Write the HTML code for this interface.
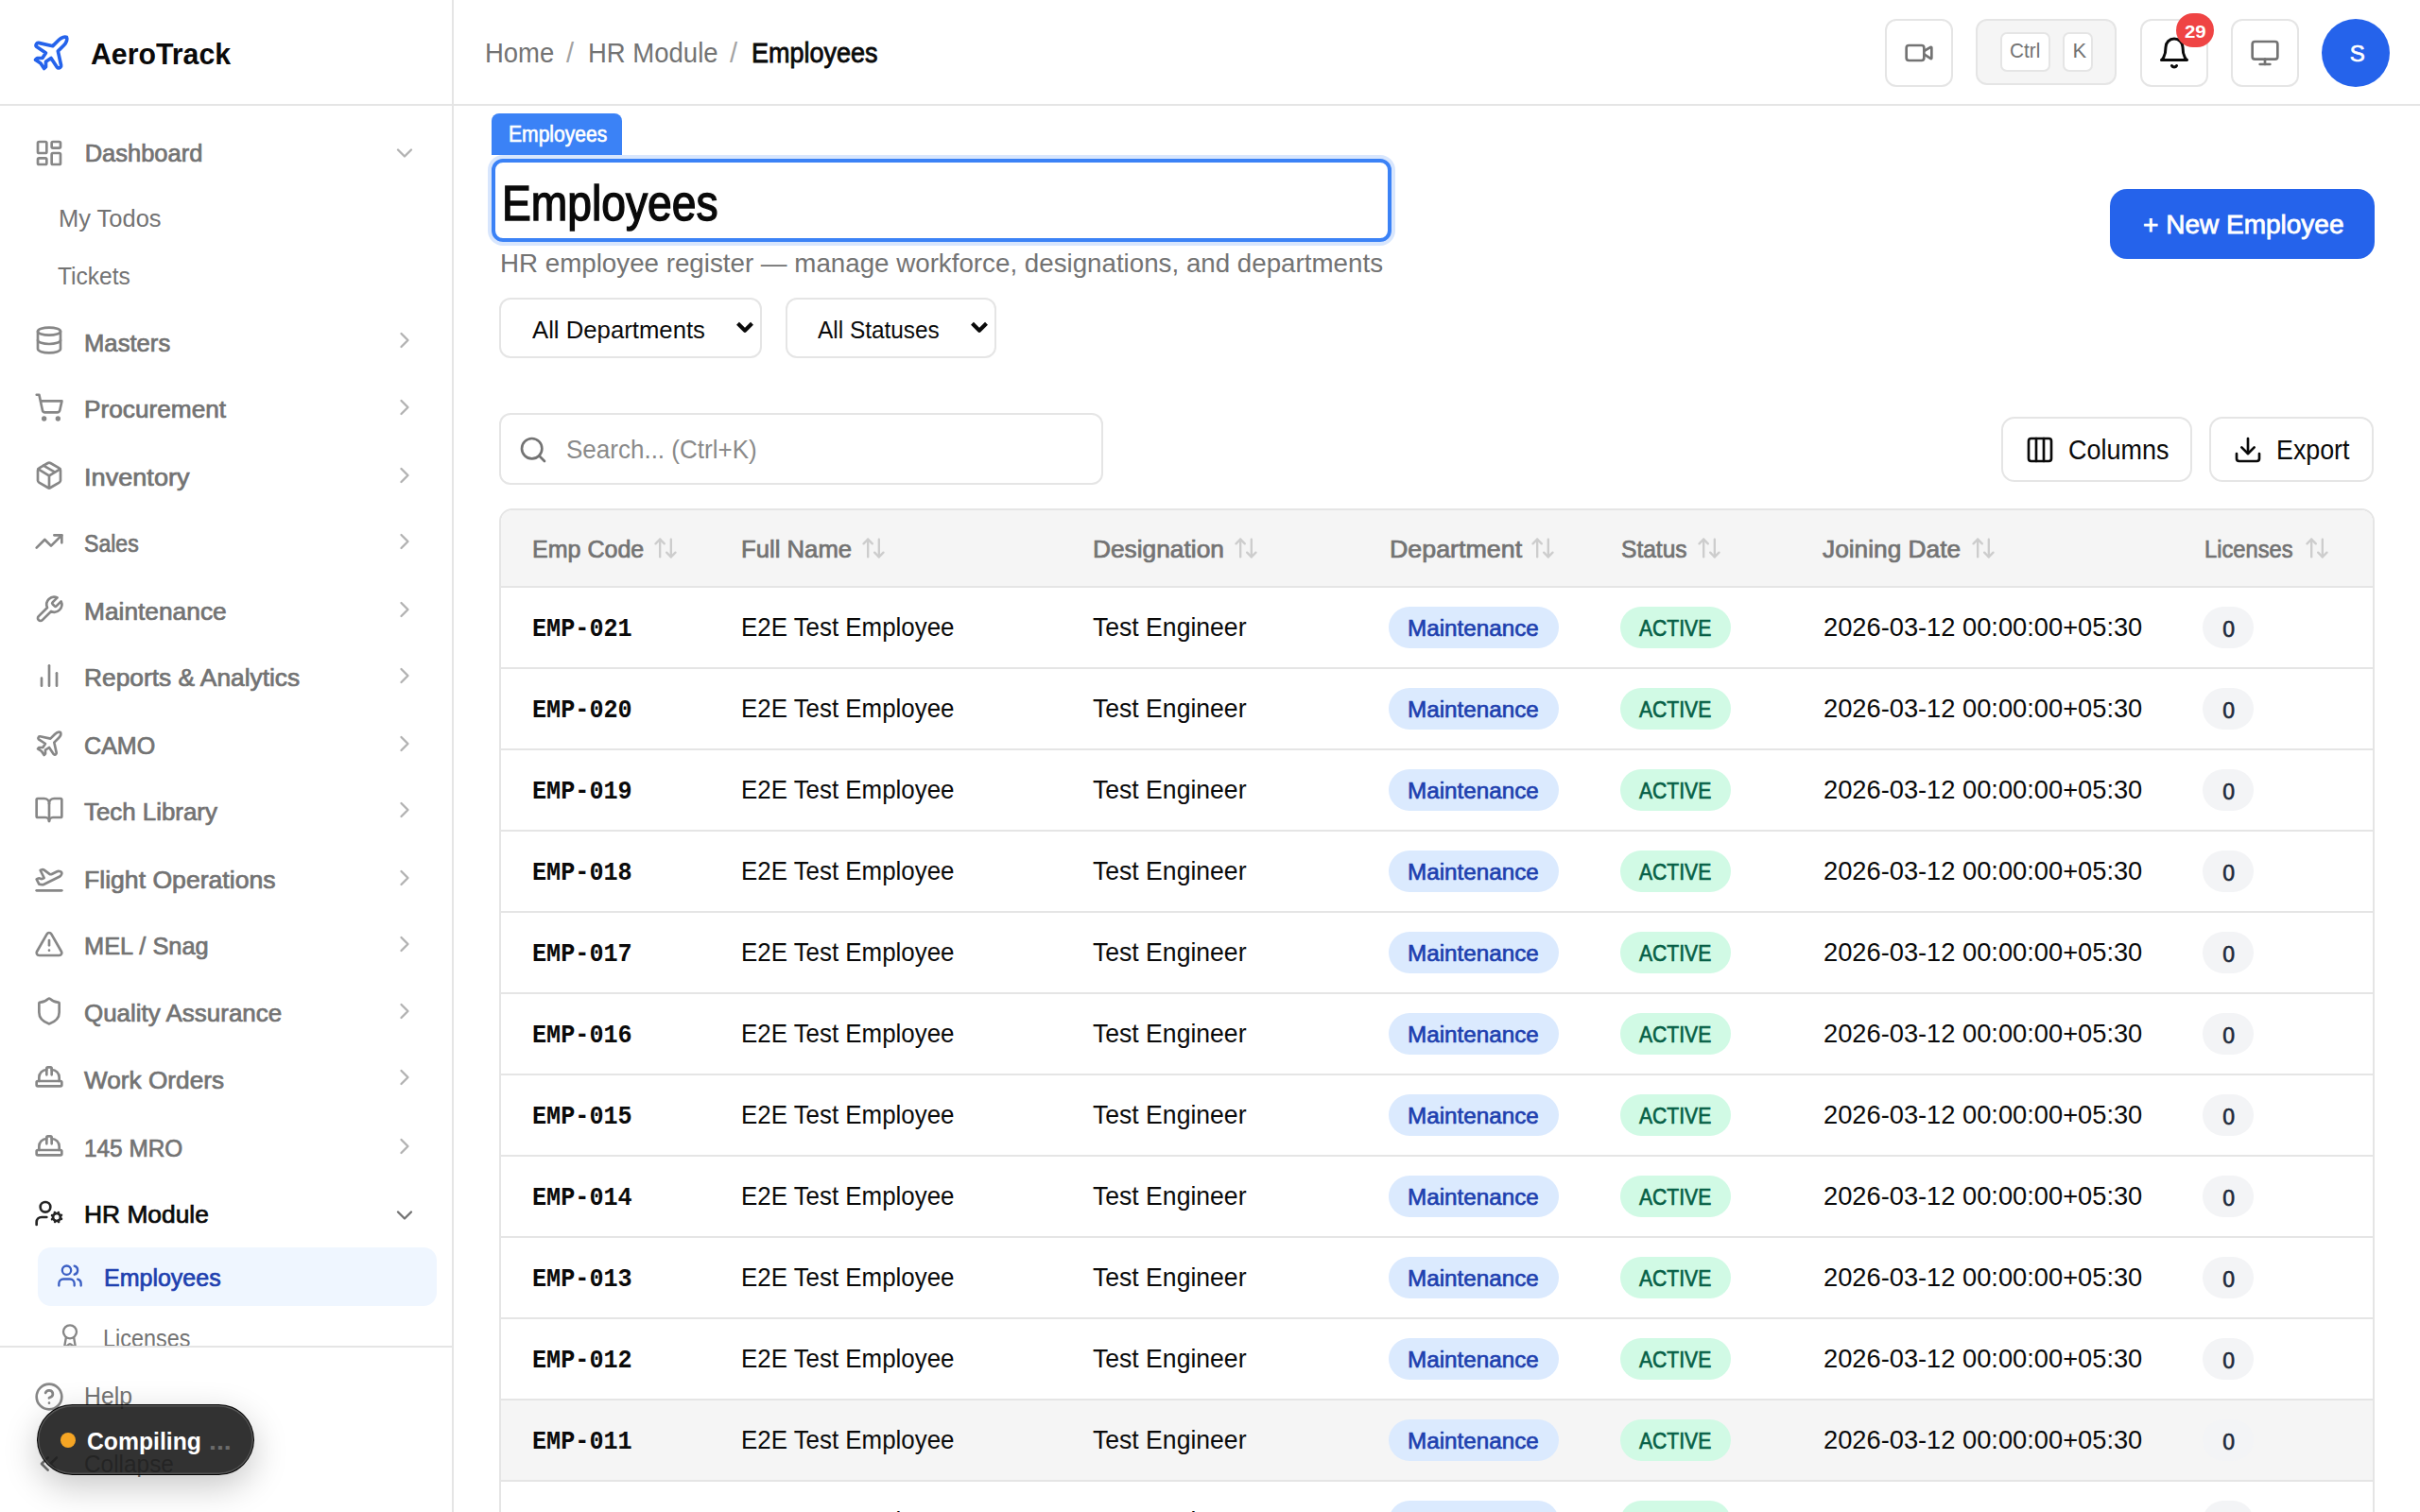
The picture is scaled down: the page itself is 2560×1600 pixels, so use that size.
<!DOCTYPE html>
<html><head><meta charset="utf-8"><title>Employees</title>
<style>
html,body{margin:0;padding:0;width:2560px;height:1600px;overflow:hidden;background:#fff;font-family:"Liberation Sans",sans-serif;}
.t{position:absolute;line-height:1;white-space:nowrap}
.b{position:absolute}
.i{position:absolute;overflow:visible}
</style></head><body>
<div class="b" style="left:0px;top:110px;width:2560px;height:2px;background:#e5e5e5"></div>
<div class="b" style="left:478px;top:0px;width:2px;height:1600px;background:#e5e5e5"></div>
<svg class="i" style="left:32.25px;top:33.60px;" width="44" height="44" viewBox="0 0 24 24" fill="none" stroke="#2563eb" stroke-width="2" stroke-linecap="round" stroke-linejoin="round"><path d="M17.8 19.2 16 11l3.5-3.5C21 6 21.5 4 21 3c-1-.5-3 0-4.5 1.5L13 8 4.8 6.2c-.5-.1-.9.1-1.1.5l-.3.5c-.2.5-.1 1 .3 1.3L9 12l-2 3H4l-1 1 3 2 2 3 1-1v-3l3-2 3.5 5.3c.3.4.8.5 1.3.3l.5-.2c.4-.3.6-.7.5-1.2z"/></svg>
<div class="t" style="left:96.40px;top:40.71px;font-size:32px;font-weight:700;color:#0a0a0a;letter-spacing:0.000px;font-family:'Liberation Sans', sans-serif;transform:scaleX(0.9461);transform-origin:0 0;">AeroTrack</div>
<div class="t" style="left:513.00px;top:41.55px;font-size:29px;font-weight:400;color:#737373;letter-spacing:0.000px;font-family:'Liberation Sans', sans-serif;transform:scaleX(0.9467);transform-origin:0 0;">Home</div>
<div class="t" style="left:599.00px;top:41.55px;font-size:29px;font-weight:400;color:#a3a3a3;letter-spacing:0.000px;font-family:'Liberation Sans', sans-serif;">/</div>
<div class="t" style="left:621.50px;top:41.55px;font-size:29px;font-weight:400;color:#737373;letter-spacing:0.000px;font-family:'Liberation Sans', sans-serif;transform:scaleX(0.9483);transform-origin:0 0;">HR Module</div>
<div class="t" style="left:772.00px;top:41.55px;font-size:29px;font-weight:400;color:#a3a3a3;letter-spacing:0.000px;font-family:'Liberation Sans', sans-serif;">/</div>
<div class="t" style="left:795.18px;top:41.55px;font-size:29px;font-weight:400;color:#0a0a0a;letter-spacing:0.000px;font-family:'Liberation Sans', sans-serif;transform:scaleX(0.9305);transform-origin:0 0;-webkit-text-stroke:0.81px #0a0a0a;">Employees</div>
<div class="b" style="left:1994px;top:20px;width:72px;height:72px;border:2px solid #e5e5e5;border-radius:12px;box-sizing:border-box;background:#fff"></div>
<svg class="i" style="left:2014.00px;top:40.00px;" width="32" height="32" viewBox="0 0 24 24" fill="none" stroke="#737373" stroke-width="2" stroke-linecap="round" stroke-linejoin="round"><path d="m16 13 5.223 3.482a.5.5 0 0 0 .777-.416V7.87a.5.5 0 0 0-.752-.432L16 10.5"/><rect x="2" y="6" width="14" height="12" rx="2"/></svg>
<div class="b" style="left:2090px;top:20px;width:149px;height:70px;border:2px solid #e5e5e5;border-radius:12px;box-sizing:border-box;background:#f5f5f5"></div>
<div class="b" style="left:2116px;top:34px;width:53px;height:42px;border:2px solid #e5e5e5;border-radius:7px;box-sizing:border-box;background:#fff"></div>
<div class="b" style="left:2182px;top:34px;width:32px;height:42px;border:2px solid #e5e5e5;border-radius:7px;box-sizing:border-box;background:#fff"></div>
<div class="t" style="left:2126.00px;top:43.27px;font-size:22px;font-weight:400;color:#737373;letter-spacing:0.000px;font-family:'Liberation Sans', sans-serif;transform:scaleX(0.9442);transform-origin:0 0;">Ctrl</div>
<div class="t" style="left:2192.50px;top:43.27px;font-size:22px;font-weight:400;color:#737373;letter-spacing:0.000px;font-family:'Liberation Sans', sans-serif;">K</div>
<div class="b" style="left:2264px;top:20px;width:72px;height:72px;border:2px solid #e5e5e5;border-radius:12px;box-sizing:border-box;background:#fff"></div>
<svg class="i" style="left:2282.00px;top:38.00px;" width="36" height="36" viewBox="0 0 24 24" fill="none" stroke="#0a0a0a" stroke-width="2" stroke-linecap="round" stroke-linejoin="round"><path d="M6 8a6 6 0 0 1 12 0c0 7 3 9 3 9H3s3-2 3-9"/><path d="M10.3 21a1.94 1.94 0 0 0 3.4 0"/></svg>
<div class="b" style="left:2302px;top:14px;width:40px;height:36px;background:#ef4444;border-radius:20px"></div>
<div class="t" style="left:2311.00px;top:24.01px;font-size:19px;font-weight:700;color:#fff;letter-spacing:0.000px;font-family:'Liberation Sans', sans-serif;transform:scaleX(1.0763);transform-origin:0 0;">29</div>
<div class="b" style="left:2360px;top:20px;width:72px;height:72px;border:2px solid #e5e5e5;border-radius:12px;box-sizing:border-box;background:#fff"></div>
<svg class="i" style="left:2380.00px;top:40.00px;" width="32" height="32" viewBox="0 0 24 24" fill="none" stroke="#737373" stroke-width="2" stroke-linecap="round" stroke-linejoin="round"><rect width="20" height="14" x="2" y="3" rx="2"/><line x1="8" x2="16" y1="21" y2="21"/><line x1="12" x2="12" y1="17" y2="21"/></svg>
<div class="b" style="left:2456px;top:20px;width:72px;height:72px;background:#2563eb;border-radius:50%"></div>
<div class="t" style="left:2485.84px;top:45.38px;font-size:24px;font-weight:400;color:#fff;letter-spacing:0.000px;font-family:'Liberation Sans', sans-serif;-webkit-text-stroke:0.67px #fff;">S</div>
<div class="t" style="left:89.66px;top:150.01px;font-size:25.5px;font-weight:400;color:#737373;letter-spacing:0.000px;font-family:'Liberation Sans', sans-serif;-webkit-text-stroke:0.71px #737373;">Dashboard</div>
<svg class="i" style="left:36.00px;top:146.00px;" width="32" height="32" viewBox="0 0 24 24" fill="none" stroke="#878787" stroke-width="2" stroke-linecap="round" stroke-linejoin="round"><rect width="7" height="9" x="3" y="3" rx="1"/><rect width="7" height="5" x="14" y="3" rx="1"/><rect width="7" height="9" x="14" y="12" rx="1"/><rect width="7" height="5" x="3" y="16" rx="1"/></svg>
<svg class="i" style="left:414.00px;top:148.00px;" width="28" height="28" viewBox="0 0 24 24" fill="none" stroke="#b2b2b2" stroke-width="2" stroke-linecap="round" stroke-linejoin="round"><path d="m6 9 6 6 6-6"/></svg>
<div class="t" style="left:61.50px;top:217.99px;font-size:26px;font-weight:400;color:#737373;letter-spacing:0.000px;font-family:'Liberation Sans', sans-serif;transform:scaleX(0.9796);transform-origin:0 0;">My Todos</div>
<div class="t" style="left:60.50px;top:279.39px;font-size:26px;font-weight:400;color:#737373;letter-spacing:0.000px;font-family:'Liberation Sans', sans-serif;transform:scaleX(0.9449);transform-origin:0 0;">Tickets</div>
<div class="t" style="left:88.96px;top:350.71px;font-size:25.5px;font-weight:400;color:#737373;letter-spacing:0.000px;font-family:'Liberation Sans', sans-serif;transform:scaleX(1.0058);transform-origin:0 0;-webkit-text-stroke:0.71px #737373;">Masters</div>
<svg class="i" style="left:36.00px;top:344.30px;" width="32" height="32" viewBox="0 0 24 24" fill="none" stroke="#878787" stroke-width="2" stroke-linecap="round" stroke-linejoin="round"><ellipse cx="12" cy="5" rx="9" ry="3"/><path d="M3 5V19A9 3 0 0 0 21 19V5"/><path d="M3 12A9 3 0 0 0 21 12"/></svg>
<svg class="i" style="left:414.00px;top:346.30px;" width="28" height="28" viewBox="0 0 24 24" fill="none" stroke="#b2b2b2" stroke-width="2" stroke-linecap="round" stroke-linejoin="round"><path d="m9 18 6-6-6-6"/></svg>
<div class="t" style="left:88.97px;top:421.11px;font-size:25.5px;font-weight:400;color:#737373;letter-spacing:0.000px;font-family:'Liberation Sans', sans-serif;transform:scaleX(1.0286);transform-origin:0 0;-webkit-text-stroke:0.71px #737373;">Procurement</div>
<svg class="i" style="left:36.00px;top:414.70px;" width="32" height="32" viewBox="0 0 24 24" fill="none" stroke="#878787" stroke-width="2" stroke-linecap="round" stroke-linejoin="round"><circle cx="8" cy="21" r="1"/><circle cx="19" cy="21" r="1"/><path d="M2.05 2.05h2l2.66 12.42a2 2 0 0 0 2 1.58h9.78a2 2 0 0 0 1.95-1.57l1.65-7.43H5.12"/></svg>
<svg class="i" style="left:414.00px;top:416.70px;" width="28" height="28" viewBox="0 0 24 24" fill="none" stroke="#b2b2b2" stroke-width="2" stroke-linecap="round" stroke-linejoin="round"><path d="m9 18 6-6-6-6"/></svg>
<div class="t" style="left:88.98px;top:493.31px;font-size:25.5px;font-weight:400;color:#737373;letter-spacing:0.000px;font-family:'Liberation Sans', sans-serif;transform:scaleX(1.0639);transform-origin:0 0;-webkit-text-stroke:0.71px #737373;">Inventory</div>
<svg class="i" style="left:36.00px;top:486.90px;" width="32" height="32" viewBox="0 0 24 24" fill="none" stroke="#878787" stroke-width="2" stroke-linecap="round" stroke-linejoin="round"><path d="M11 21.73a2 2 0 0 0 2 0l7-4A2 2 0 0 0 21 16V8a2 2 0 0 0-1-1.73l-7-4a2 2 0 0 0-2 0l-7 4A2 2 0 0 0 3 8v8a2 2 0 0 0 1 1.73z"/><path d="M12 22V12"/><path d="m3.3 7 7.703 4.734a2 2 0 0 0 1.994 0L20.7 7"/><path d="m7.5 4.27 9 5.15"/></svg>
<svg class="i" style="left:414.00px;top:488.90px;" width="28" height="28" viewBox="0 0 24 24" fill="none" stroke="#b2b2b2" stroke-width="2" stroke-linecap="round" stroke-linejoin="round"><path d="m9 18 6-6-6-6"/></svg>
<div class="t" style="left:88.92px;top:563.21px;font-size:25.5px;font-weight:400;color:#737373;letter-spacing:0.000px;font-family:'Liberation Sans', sans-serif;transform:scaleX(0.9044);transform-origin:0 0;-webkit-text-stroke:0.71px #737373;">Sales</div>
<svg class="i" style="left:36.00px;top:556.80px;" width="32" height="32" viewBox="0 0 24 24" fill="none" stroke="#878787" stroke-width="2" stroke-linecap="round" stroke-linejoin="round"><polyline points="22 7 13.5 15.5 8.5 10.5 2 17"/><polyline points="16 7 22 7 22 13"/></svg>
<svg class="i" style="left:414.00px;top:558.80px;" width="28" height="28" viewBox="0 0 24 24" fill="none" stroke="#b2b2b2" stroke-width="2" stroke-linecap="round" stroke-linejoin="round"><path d="m9 18 6-6-6-6"/></svg>
<div class="t" style="left:88.97px;top:634.91px;font-size:25.5px;font-weight:400;color:#737373;letter-spacing:0.000px;font-family:'Liberation Sans', sans-serif;transform:scaleX(1.0320);transform-origin:0 0;-webkit-text-stroke:0.71px #737373;">Maintenance</div>
<svg class="i" style="left:36.00px;top:628.50px;" width="32" height="32" viewBox="0 0 24 24" fill="none" stroke="#878787" stroke-width="2" stroke-linecap="round" stroke-linejoin="round"><path d="M14.7 6.3a1 1 0 0 0 0 1.4l1.6 1.6a1 1 0 0 0 1.4 0l3.77-3.77a6 6 0 0 1-7.94 7.94l-6.91 6.91a2.12 2.12 0 0 1-3-3l6.91-6.91a6 6 0 0 1 7.94-7.94l-3.76 3.76z"/></svg>
<svg class="i" style="left:414.00px;top:630.50px;" width="28" height="28" viewBox="0 0 24 24" fill="none" stroke="#b2b2b2" stroke-width="2" stroke-linecap="round" stroke-linejoin="round"><path d="m9 18 6-6-6-6"/></svg>
<div class="t" style="left:88.97px;top:704.91px;font-size:25.5px;font-weight:400;color:#737373;letter-spacing:0.000px;font-family:'Liberation Sans', sans-serif;transform:scaleX(1.0320);transform-origin:0 0;-webkit-text-stroke:0.71px #737373;">Reports &amp; Analytics</div>
<svg class="i" style="left:36.00px;top:698.50px;" width="32" height="32" viewBox="0 0 24 24" fill="none" stroke="#878787" stroke-width="2" stroke-linecap="round" stroke-linejoin="round"><line x1="18" x2="18" y1="20" y2="10"/><line x1="12" x2="12" y1="20" y2="4"/><line x1="6" x2="6" y1="20" y2="14"/></svg>
<svg class="i" style="left:414.00px;top:700.50px;" width="28" height="28" viewBox="0 0 24 24" fill="none" stroke="#b2b2b2" stroke-width="2" stroke-linecap="round" stroke-linejoin="round"><path d="m9 18 6-6-6-6"/></svg>
<div class="t" style="left:88.95px;top:777.31px;font-size:25.5px;font-weight:400;color:#737373;letter-spacing:0.000px;font-family:'Liberation Sans', sans-serif;transform:scaleX(0.9843);transform-origin:0 0;-webkit-text-stroke:0.71px #737373;">CAMO</div>
<svg class="i" style="left:36.00px;top:770.90px;" width="32" height="32" viewBox="0 0 24 24" fill="none" stroke="#878787" stroke-width="2" stroke-linecap="round" stroke-linejoin="round"><path d="M17.8 19.2 16 11l3.5-3.5C21 6 21.5 4 21 3c-1-.5-3 0-4.5 1.5L13 8 4.8 6.2c-.5-.1-.9.1-1.1.5l-.3.5c-.2.5-.1 1 .3 1.3L9 12l-2 3H4l-1 1 3 2 2 3 1-1v-3l3-2 3.5 5.3c.3.4.8.5 1.3.3l.5-.2c.4-.3.6-.7.5-1.2z"/></svg>
<svg class="i" style="left:414.00px;top:772.90px;" width="28" height="28" viewBox="0 0 24 24" fill="none" stroke="#b2b2b2" stroke-width="2" stroke-linecap="round" stroke-linejoin="round"><path d="m9 18 6-6-6-6"/></svg>
<div class="t" style="left:88.96px;top:846.91px;font-size:25.5px;font-weight:400;color:#737373;letter-spacing:0.000px;font-family:'Liberation Sans', sans-serif;transform:scaleX(1.0146);transform-origin:0 0;-webkit-text-stroke:0.71px #737373;">Tech Library</div>
<svg class="i" style="left:36.00px;top:840.50px;" width="32" height="32" viewBox="0 0 24 24" fill="none" stroke="#878787" stroke-width="2" stroke-linecap="round" stroke-linejoin="round"><path d="M12 7v14"/><path d="M3 18a1 1 0 0 1-1-1V4a1 1 0 0 1 1-1h5a4 4 0 0 1 4 4 4 4 0 0 1 4-4h5a1 1 0 0 1 1 1v13a1 1 0 0 1-1 1h-6a3 3 0 0 0-3 3 3 3 0 0 0-3-3z"/></svg>
<svg class="i" style="left:414.00px;top:842.50px;" width="28" height="28" viewBox="0 0 24 24" fill="none" stroke="#b2b2b2" stroke-width="2" stroke-linecap="round" stroke-linejoin="round"><path d="m9 18 6-6-6-6"/></svg>
<div class="t" style="left:88.97px;top:918.91px;font-size:25.5px;font-weight:400;color:#737373;letter-spacing:0.000px;font-family:'Liberation Sans', sans-serif;transform:scaleX(1.0431);transform-origin:0 0;-webkit-text-stroke:0.71px #737373;">Flight Operations</div>
<svg class="i" style="left:36.00px;top:912.50px;" width="32" height="32" viewBox="0 0 24 24" fill="none" stroke="#878787" stroke-width="2" stroke-linecap="round" stroke-linejoin="round"><path d="M2 22h20"/><path d="M6.36 17.4 4 17l-2-4 1.1-.55a2 2 0 0 1 1.8 0l.17.1a2 2 0 0 0 1.8 0L8 12 5 6l.9-.45a2 2 0 0 1 2.09.2l4.02 3a2 2 0 0 0 2.1.2l4.19-2.06a2.41 2.41 0 0 1 1.73-.17L21 7a1.4 1.4 0 0 1 .87 1.99l-.38.76c-.23.46-.6.84-1.07 1.08L7.58 17.2a2 2 0 0 1-1.22.18Z"/></svg>
<svg class="i" style="left:414.00px;top:914.50px;" width="28" height="28" viewBox="0 0 24 24" fill="none" stroke="#b2b2b2" stroke-width="2" stroke-linecap="round" stroke-linejoin="round"><path d="m9 18 6-6-6-6"/></svg>
<div class="t" style="left:88.96px;top:988.91px;font-size:25.5px;font-weight:400;color:#737373;letter-spacing:0.000px;font-family:'Liberation Sans', sans-serif;transform:scaleX(0.9950);transform-origin:0 0;-webkit-text-stroke:0.71px #737373;">MEL / Snag</div>
<svg class="i" style="left:36.00px;top:982.50px;" width="32" height="32" viewBox="0 0 24 24" fill="none" stroke="#878787" stroke-width="2" stroke-linecap="round" stroke-linejoin="round"><path d="m21.73 18-8-14a2 2 0 0 0-3.48 0l-8 14A2 2 0 0 0 4 21h16a2 2 0 0 0 1.73-3"/><path d="M12 9v4"/><path d="M12 17h.01"/></svg>
<svg class="i" style="left:414.00px;top:984.50px;" width="28" height="28" viewBox="0 0 24 24" fill="none" stroke="#b2b2b2" stroke-width="2" stroke-linecap="round" stroke-linejoin="round"><path d="m9 18 6-6-6-6"/></svg>
<div class="t" style="left:88.96px;top:1060.41px;font-size:25.5px;font-weight:400;color:#737373;letter-spacing:0.000px;font-family:'Liberation Sans', sans-serif;transform:scaleX(1.0177);transform-origin:0 0;-webkit-text-stroke:0.71px #737373;">Quality Assurance</div>
<svg class="i" style="left:36.00px;top:1054.00px;" width="32" height="32" viewBox="0 0 24 24" fill="none" stroke="#878787" stroke-width="2" stroke-linecap="round" stroke-linejoin="round"><path d="M20 13c0 5-3.5 7.5-7.66 8.95a1 1 0 0 1-.67-.01C7.5 20.5 4 18 4 13V6a1 1 0 0 1 1-1c2 0 4.5-1.2 6.24-2.72a1.17 1.17 0 0 1 1.52 0C14.51 3.81 17 5 19 5a1 1 0 0 1 1 1z"/></svg>
<svg class="i" style="left:414.00px;top:1056.00px;" width="28" height="28" viewBox="0 0 24 24" fill="none" stroke="#b2b2b2" stroke-width="2" stroke-linecap="round" stroke-linejoin="round"><path d="m9 18 6-6-6-6"/></svg>
<div class="t" style="left:88.97px;top:1130.51px;font-size:25.5px;font-weight:400;color:#737373;letter-spacing:0.000px;font-family:'Liberation Sans', sans-serif;transform:scaleX(1.0277);transform-origin:0 0;-webkit-text-stroke:0.71px #737373;">Work Orders</div>
<svg class="i" style="left:36.00px;top:1124.10px;" width="32" height="32" viewBox="0 0 24 24" fill="none" stroke="#878787" stroke-width="2" stroke-linecap="round" stroke-linejoin="round"><path d="M2 18a1 1 0 0 0 1 1h18a1 1 0 0 0 1-1v-2a1 1 0 0 0-1-1H3a1 1 0 0 0-1 1v2z"/><path d="M10 10V5a1 1 0 0 1 1-1h2a1 1 0 0 1 1 1v5"/><path d="M4 15v-3a6 6 0 0 1 6-6"/><path d="M14 6a6 6 0 0 1 6 6v3"/></svg>
<svg class="i" style="left:414.00px;top:1126.10px;" width="28" height="28" viewBox="0 0 24 24" fill="none" stroke="#b2b2b2" stroke-width="2" stroke-linecap="round" stroke-linejoin="round"><path d="m9 18 6-6-6-6"/></svg>
<div class="t" style="left:88.94px;top:1202.91px;font-size:25.5px;font-weight:400;color:#737373;letter-spacing:0.000px;font-family:'Liberation Sans', sans-serif;transform:scaleX(0.9558);transform-origin:0 0;-webkit-text-stroke:0.71px #737373;">145 MRO</div>
<svg class="i" style="left:36.00px;top:1196.50px;" width="32" height="32" viewBox="0 0 24 24" fill="none" stroke="#878787" stroke-width="2" stroke-linecap="round" stroke-linejoin="round"><path d="M2 18a1 1 0 0 0 1 1h18a1 1 0 0 0 1-1v-2a1 1 0 0 0-1-1H3a1 1 0 0 0-1 1v2z"/><path d="M10 10V5a1 1 0 0 1 1-1h2a1 1 0 0 1 1 1v5"/><path d="M4 15v-3a6 6 0 0 1 6-6"/><path d="M14 6a6 6 0 0 1 6 6v3"/></svg>
<svg class="i" style="left:414.00px;top:1198.50px;" width="28" height="28" viewBox="0 0 24 24" fill="none" stroke="#b2b2b2" stroke-width="2" stroke-linecap="round" stroke-linejoin="round"><path d="m9 18 6-6-6-6"/></svg>
<div class="t" style="left:89.17px;top:1272.61px;font-size:25.5px;font-weight:400;color:#0a0a0a;letter-spacing:0.000px;font-family:'Liberation Sans', sans-serif;transform:scaleX(1.0334);transform-origin:0 0;-webkit-text-stroke:0.71px #0a0a0a;">HR Module</div>
<svg class="i" style="left:36.00px;top:1268.00px;" width="32" height="32" viewBox="0 0 24 24" fill="none" stroke="#262626" stroke-width="2" stroke-linecap="round" stroke-linejoin="round"><circle cx="18" cy="15" r="3"/><circle cx="9" cy="7" r="4"/><path d="M10 15H6a4 4 0 0 0-4 4v2"/><path d="m21.7 16.4-.9-.3"/><path d="m15.2 13.9-.9-.3"/><path d="m16.6 18.7.3-.9"/><path d="m19.1 12.2.3-.9"/><path d="m19.6 18.7-.4-1"/><path d="m16.8 12.3-.4-1"/><path d="m14.3 16.6 1-.4"/><path d="m20.7 13.8 1-.4"/></svg>
<svg class="i" style="left:414.00px;top:1271.50px;" width="28" height="28" viewBox="0 0 24 24" fill="none" stroke="#737373" stroke-width="2" stroke-linecap="round" stroke-linejoin="round"><path d="m6 9 6 6 6-6"/></svg>
<div class="b" style="left:40px;top:1320px;width:422px;height:62px;background:#eff6ff;border-radius:14px"></div>
<svg class="i" style="left:60.00px;top:1336.00px;" width="28" height="28" viewBox="0 0 24 24" fill="none" stroke="#3b5fc4" stroke-width="2" stroke-linecap="round" stroke-linejoin="round"><path d="M16 21v-2a4 4 0 0 0-4-4H6a4 4 0 0 0-4 4v2"/><circle cx="9" cy="7" r="4"/><path d="M22 21v-2a4 4 0 0 0-3-3.87"/><path d="M16 3.13a4 4 0 0 1 0 7.75"/></svg>
<div class="t" style="left:109.55px;top:1339.71px;font-size:25.5px;font-weight:400;color:#1e40af;letter-spacing:0.000px;font-family:'Liberation Sans', sans-serif;transform:scaleX(0.9802);transform-origin:0 0;-webkit-text-stroke:0.71px #1e40af;">Employees</div>
<div class="b" style="left:0;top:1386px;width:478px;height:38px;overflow:hidden">
<svg class="i" style="left:60.00px;top:14.00px;" width="28" height="28" viewBox="0 0 24 24" fill="none" stroke="#878787" stroke-width="2" stroke-linecap="round" stroke-linejoin="round"><path d="m15.477 12.89 1.515 8.526a.5.5 0 0 1-.81.47l-3.58-2.687a1 1 0 0 0-1.197 0l-3.586 2.686a.5.5 0 0 1-.81-.469l1.514-8.526"/><circle cx="12" cy="8" r="6"/></svg>
<div class="t" style="left:109.20px;top:16.99px;font-size:26px;font-weight:400;color:#737373;letter-spacing:0.000px;font-family:'Liberation Sans', sans-serif;transform:scaleX(0.8999);transform-origin:0 0;">Licenses</div>
</div>
<div class="b" style="left:0px;top:1424px;width:478px;height:2px;background:#e5e5e5"></div>
<svg class="i" style="left:35.90px;top:1461.50px;" width="32" height="32" viewBox="0 0 24 24" fill="none" stroke="#878787" stroke-width="2" stroke-linecap="round" stroke-linejoin="round"><circle cx="12" cy="12" r="10"/><path d="M9.09 9a3 3 0 0 1 5.83 1c0 2-3 3-3 3"/><path d="M12 17h.01"/></svg>
<div class="t" style="left:89.40px;top:1463.79px;font-size:26px;font-weight:400;color:#737373;letter-spacing:0.000px;font-family:'Liberation Sans', sans-serif;transform:scaleX(0.9526);transform-origin:0 0;">Help</div>
<svg class="i" style="left:36.00px;top:1533.00px;" width="32" height="32" viewBox="0 0 24 24" fill="none" stroke="#737373" stroke-width="2" stroke-linecap="round" stroke-linejoin="round"><path d="m11 17-5-5 5-5"/><path d="m18 17-5-5 5-5"/></svg>
<div class="t" style="left:89.40px;top:1535.99px;font-size:26px;font-weight:400;color:#737373;letter-spacing:0.000px;font-family:'Liberation Sans', sans-serif;transform:scaleX(0.9383);transform-origin:0 0;">Collapse</div>
<div class="b" style="left:38.5px;top:1486.3px;width:230.8px;height:75.2px;border-radius:38px;background:rgba(28,28,28,0.9);border:1.5px solid rgba(0,0,0,0.9);box-sizing:border-box;box-shadow:inset 0 0 0 1.5px rgba(255,255,255,0.16),0 12px 36px rgba(0,0,0,0.22)"></div>
<div class="b" style="left:63.5px;top:1515.8px;width:16.5px;height:16.5px;background:#f5a524;border-radius:50%"></div>
<div class="t" style="left:92.30px;top:1512.29px;font-size:26px;font-weight:700;color:#fff;letter-spacing:0.000px;font-family:'Liberation Sans', sans-serif;transform:scaleX(0.9509);transform-origin:0 0;">Compiling</div>
<div class="t" style="left:221.30px;top:1512.29px;font-size:26px;font-weight:700;color:#6b6b6b;letter-spacing:0.000px;font-family:'Liberation Sans', sans-serif;transform:scaleX(1.0917);transform-origin:0 0;">...</div>
<div class="b" style="left:520px;top:120px;width:138px;height:44px;background:#3b82f6;border-radius:8px 8px 0 0"></div>
<div class="t" style="left:538.10px;top:130.73px;font-size:23px;font-weight:400;color:#fff;letter-spacing:0.000px;font-family:'Liberation Sans', sans-serif;transform:scaleX(0.9171);transform-origin:0 0;-webkit-text-stroke:0.64px #fff;">Employees</div>
<div class="b" style="left:520px;top:168px;width:952px;height:88px;border:4px solid #3b82f6;border-radius:12px;box-sizing:border-box;box-shadow:0 0 0 4px rgba(59,130,246,0.2);background:#fff"></div>
<div class="t" style="left:530.95px;top:189.62px;font-size:51px;font-weight:400;color:#0a0a0a;letter-spacing:0.000px;font-family:'Liberation Sans', sans-serif;transform:scaleX(0.9057);transform-origin:0 0;-webkit-text-stroke:1.43px #0a0a0a;">Employees</div>
<div class="t" style="left:529.00px;top:264.69px;font-size:28px;font-weight:400;color:#737373;letter-spacing:0.000px;font-family:'Liberation Sans', sans-serif;transform:scaleX(0.9903);transform-origin:0 0;">HR employee register — manage workforce, designations, and departments</div>
<div class="b" style="left:2232px;top:200px;width:280px;height:74px;background:#2563eb;border-radius:18px"></div>
<div class="t" style="left:2267.09px;top:224.29px;font-size:28px;font-weight:400;color:#fff;letter-spacing:0.000px;font-family:'Liberation Sans', sans-serif;-webkit-text-stroke:0.78px #fff;">+ New Employee</div>
<div class="b" style="left:528px;top:315px;width:278px;height:64px;border:2px solid #e5e5e5;border-radius:12px;box-sizing:border-box;background:#fff"></div>
<div class="t" style="left:563.00px;top:335.99px;font-size:26px;font-weight:400;color:#0a0a0a;letter-spacing:0.000px;font-family:'Liberation Sans', sans-serif;transform:scaleX(0.9892);transform-origin:0 0;">All Departments</div>
<svg class="i" style="left:773.00px;top:330.50px;stroke-linecap:butt" width="30" height="30" viewBox="0 0 24 24" fill="none" stroke="#0a0a0a" stroke-width="3.3" stroke-linecap="round" stroke-linejoin="round"><path d="m6 9 6 6 6-6"/></svg>
<div class="b" style="left:831px;top:315px;width:223px;height:64px;border:2px solid #e5e5e5;border-radius:12px;box-sizing:border-box;background:#fff"></div>
<div class="t" style="left:865.00px;top:335.99px;font-size:26px;font-weight:400;color:#0a0a0a;letter-spacing:0.000px;font-family:'Liberation Sans', sans-serif;transform:scaleX(0.9382);transform-origin:0 0;">All Statuses</div>
<svg class="i" style="left:1021.00px;top:330.50px;stroke-linecap:butt" width="30" height="30" viewBox="0 0 24 24" fill="none" stroke="#0a0a0a" stroke-width="3.3" stroke-linecap="round" stroke-linejoin="round"><path d="m6 9 6 6 6-6"/></svg>
<div class="b" style="left:528px;top:437px;width:639px;height:76px;border:2px solid #e5e5e5;border-radius:12px;box-sizing:border-box;background:#fff"></div>
<svg class="i" style="left:548.00px;top:460.00px;" width="32" height="32" viewBox="0 0 24 24" fill="none" stroke="#737373" stroke-width="2" stroke-linecap="round" stroke-linejoin="round"><circle cx="11" cy="11" r="8"/><path d="m21 21-4.3-4.3"/></svg>
<div class="t" style="left:599.20px;top:462.29px;font-size:28px;font-weight:400;color:#8a8a8a;letter-spacing:0.000px;font-family:'Liberation Sans', sans-serif;transform:scaleX(0.9290);transform-origin:0 0;">Search... (Ctrl+K)</div>
<div class="b" style="left:2117px;top:441px;width:202px;height:69px;border:2px solid #e5e5e5;border-radius:14px;box-sizing:border-box;background:#fff"></div>
<svg class="i" style="left:2141.60px;top:460.00px;" width="32" height="32" viewBox="0 0 24 24" fill="none" stroke="#0a0a0a" stroke-width="2" stroke-linecap="round" stroke-linejoin="round"><rect width="18" height="18" x="3" y="3" rx="2"/><path d="M9 3v18"/><path d="M15 3v18"/></svg>
<div class="t" style="left:2187.60px;top:461.85px;font-size:29px;font-weight:400;color:#0a0a0a;letter-spacing:0.000px;font-family:'Liberation Sans', sans-serif;transform:scaleX(0.9300);transform-origin:0 0;">Columns</div>
<div class="b" style="left:2337px;top:441px;width:174px;height:69px;border:2px solid #e5e5e5;border-radius:14px;box-sizing:border-box;background:#fff"></div>
<svg class="i" style="left:2362.00px;top:460.00px;" width="32" height="32" viewBox="0 0 24 24" fill="none" stroke="#0a0a0a" stroke-width="2" stroke-linecap="round" stroke-linejoin="round"><path d="M21 15v4a2 2 0 0 1-2 2H5a2 2 0 0 1-2-2v-4"/><polyline points="7 10 12 15 17 10"/><line x1="12" x2="12" y1="15" y2="3"/></svg>
<div class="t" style="left:2408.00px;top:461.85px;font-size:29px;font-weight:400;color:#0a0a0a;letter-spacing:0.000px;font-family:'Liberation Sans', sans-serif;transform:scaleX(0.9247);transform-origin:0 0;">Export</div>
<div class="b" style="left:528px;top:538px;width:1984px;height:1100px;border:2px solid #e5e5e5;border-radius:14px;box-sizing:border-box;background:#fff;overflow:hidden">
<div class="b" style="left:0;top:0;width:1980px;height:82px;background:#f5f5f5"></div>
</div>
<div class="b" style="left:530px;top:620px;width:1980px;height:2px;background:#e5e5e5"></div>
<div class="t" style="left:563.35px;top:567.99px;font-size:26px;font-weight:400;color:#737373;letter-spacing:0.000px;font-family:'Liberation Sans', sans-serif;transform:scaleX(0.9630);transform-origin:0 0;-webkit-text-stroke:0.73px #737373;">Emp Code</div>
<svg class="i" style="left:690.17px;top:566.20px;" width="28" height="28" viewBox="0 0 24 24" fill="none" stroke="#cdcdcd" stroke-width="2" stroke-linecap="round" stroke-linejoin="round"><path d="m21 16-4 4-4-4"/><path d="M17 20V4"/><path d="m3 8 4-4 4 4"/><path d="M7 4v16"/></svg>
<div class="t" style="left:783.86px;top:567.99px;font-size:26px;font-weight:400;color:#737373;letter-spacing:0.000px;font-family:'Liberation Sans', sans-serif;transform:scaleX(0.9886);transform-origin:0 0;-webkit-text-stroke:0.73px #737373;">Full Name</div>
<svg class="i" style="left:910.17px;top:566.20px;" width="28" height="28" viewBox="0 0 24 24" fill="none" stroke="#cdcdcd" stroke-width="2" stroke-linecap="round" stroke-linejoin="round"><path d="m21 16-4 4-4-4"/><path d="M17 20V4"/><path d="m3 8 4-4 4 4"/><path d="M7 4v16"/></svg>
<div class="t" style="left:1156.37px;top:567.99px;font-size:26px;font-weight:400;color:#737373;letter-spacing:0.000px;font-family:'Liberation Sans', sans-serif;transform:scaleX(1.0115);transform-origin:0 0;-webkit-text-stroke:0.73px #737373;">Designation</div>
<svg class="i" style="left:1304.37px;top:566.20px;" width="28" height="28" viewBox="0 0 24 24" fill="none" stroke="#cdcdcd" stroke-width="2" stroke-linecap="round" stroke-linejoin="round"><path d="m21 16-4 4-4-4"/><path d="M17 20V4"/><path d="m3 8 4-4 4 4"/><path d="M7 4v16"/></svg>
<div class="t" style="left:1469.78px;top:567.99px;font-size:26px;font-weight:400;color:#737373;letter-spacing:0.000px;font-family:'Liberation Sans', sans-serif;transform:scaleX(1.0316);transform-origin:0 0;-webkit-text-stroke:0.73px #737373;">Department</div>
<svg class="i" style="left:1617.67px;top:566.20px;" width="28" height="28" viewBox="0 0 24 24" fill="none" stroke="#cdcdcd" stroke-width="2" stroke-linecap="round" stroke-linejoin="round"><path d="m21 16-4 4-4-4"/><path d="M17 20V4"/><path d="m3 8 4-4 4 4"/><path d="M7 4v16"/></svg>
<div class="t" style="left:1714.74px;top:567.99px;font-size:26px;font-weight:400;color:#737373;letter-spacing:0.000px;font-family:'Liberation Sans', sans-serif;transform:scaleX(0.9444);transform-origin:0 0;-webkit-text-stroke:0.73px #737373;">Status</div>
<svg class="i" style="left:1793.67px;top:566.20px;" width="28" height="28" viewBox="0 0 24 24" fill="none" stroke="#cdcdcd" stroke-width="2" stroke-linecap="round" stroke-linejoin="round"><path d="m21 16-4 4-4-4"/><path d="M17 20V4"/><path d="m3 8 4-4 4 4"/><path d="M7 4v16"/></svg>
<div class="t" style="left:1927.97px;top:567.99px;font-size:26px;font-weight:400;color:#737373;letter-spacing:0.000px;font-family:'Liberation Sans', sans-serif;transform:scaleX(1.0104);transform-origin:0 0;-webkit-text-stroke:0.73px #737373;">Joining Date</div>
<svg class="i" style="left:2083.67px;top:566.20px;" width="28" height="28" viewBox="0 0 24 24" fill="none" stroke="#cdcdcd" stroke-width="2" stroke-linecap="round" stroke-linejoin="round"><path d="m21 16-4 4-4-4"/><path d="M17 20V4"/><path d="m3 8 4-4 4 4"/><path d="M7 4v16"/></svg>
<div class="t" style="left:2332.33px;top:567.99px;font-size:26px;font-weight:400;color:#737373;letter-spacing:0.000px;font-family:'Liberation Sans', sans-serif;transform:scaleX(0.9119);transform-origin:0 0;-webkit-text-stroke:0.73px #737373;">Licenses</div>
<svg class="i" style="left:2436.67px;top:566.20px;" width="28" height="28" viewBox="0 0 24 24" fill="none" stroke="#cdcdcd" stroke-width="2" stroke-linecap="round" stroke-linejoin="round"><path d="m21 16-4 4-4-4"/><path d="M17 20V4"/><path d="m3 8 4-4 4 4"/><path d="M7 4v16"/></svg>
<div class="b" style="left:530px;top:706px;width:1980px;height:2px;background:#e5e5e5"></div>
<div class="t" style="left:563.00px;top:653.02px;font-size:27px;font-weight:700;color:#0a0a0a;letter-spacing:0.000px;font-family:'Liberation Mono', monospace;transform:scaleX(0.9321);transform-origin:0 0;">EMP-021</div>
<div class="t" style="left:783.50px;top:650.19px;font-size:28px;font-weight:400;color:#0a0a0a;letter-spacing:0.000px;font-family:'Liberation Sans', sans-serif;transform:scaleX(0.9246);transform-origin:0 0;">E2E Test Employee</div>
<div class="t" style="left:1155.50px;top:650.19px;font-size:28px;font-weight:400;color:#0a0a0a;letter-spacing:0.000px;font-family:'Liberation Sans', sans-serif;transform:scaleX(0.9491);transform-origin:0 0;">Test Engineer</div>
<div class="b" style="left:1468.6px;top:642.3px;width:180.70000000000005px;height:43.40000000000009px;background:#dbeafe;border-radius:22px"></div>
<div class="t" style="left:1489.34px;top:654.43px;font-size:23px;font-weight:400;color:#1e40af;letter-spacing:0.000px;font-family:'Liberation Sans', sans-serif;transform:scaleX(1.0543);transform-origin:0 0;-webkit-text-stroke:0.64px #1e40af;">Maintenance</div>
<div class="b" style="left:1714.4px;top:642.3px;width:116.59999999999991px;height:43.40000000000009px;background:#d1fae5;border-radius:22px"></div>
<div class="t" style="left:1734.30px;top:654.43px;font-size:23px;font-weight:400;color:#065f46;letter-spacing:0.000px;font-family:'Liberation Sans', sans-serif;transform:scaleX(0.9178);transform-origin:0 0;-webkit-text-stroke:0.64px #065f46;">ACTIVE</div>
<div class="t" style="left:1928.60px;top:650.19px;font-size:28px;font-weight:400;color:#0a0a0a;letter-spacing:0.000px;font-family:'Liberation Sans', sans-serif;transform:scaleX(0.9736);transform-origin:0 0;">2026-03-12 00:00:00+05:30</div>
<div class="b" style="left:2330.3px;top:642.3px;width:53.69999999999982px;height:43.40000000000009px;background:#f3f4f6;border-radius:22px"></div>
<div class="t" style="left:2351.32px;top:655.13px;font-size:23px;font-weight:400;color:#1e293b;letter-spacing:0.000px;font-family:'Liberation Sans', sans-serif;-webkit-text-stroke:0.64px #1e293b;">0</div>
<div class="b" style="left:530px;top:792px;width:1980px;height:2px;background:#e5e5e5"></div>
<div class="t" style="left:563.00px;top:739.02px;font-size:27px;font-weight:700;color:#0a0a0a;letter-spacing:0.000px;font-family:'Liberation Mono', monospace;transform:scaleX(0.9321);transform-origin:0 0;">EMP-020</div>
<div class="t" style="left:783.50px;top:736.19px;font-size:28px;font-weight:400;color:#0a0a0a;letter-spacing:0.000px;font-family:'Liberation Sans', sans-serif;transform:scaleX(0.9246);transform-origin:0 0;">E2E Test Employee</div>
<div class="t" style="left:1155.50px;top:736.19px;font-size:28px;font-weight:400;color:#0a0a0a;letter-spacing:0.000px;font-family:'Liberation Sans', sans-serif;transform:scaleX(0.9491);transform-origin:0 0;">Test Engineer</div>
<div class="b" style="left:1468.6px;top:728.3px;width:180.70000000000005px;height:43.40000000000009px;background:#dbeafe;border-radius:22px"></div>
<div class="t" style="left:1489.34px;top:740.43px;font-size:23px;font-weight:400;color:#1e40af;letter-spacing:0.000px;font-family:'Liberation Sans', sans-serif;transform:scaleX(1.0543);transform-origin:0 0;-webkit-text-stroke:0.64px #1e40af;">Maintenance</div>
<div class="b" style="left:1714.4px;top:728.3px;width:116.59999999999991px;height:43.40000000000009px;background:#d1fae5;border-radius:22px"></div>
<div class="t" style="left:1734.30px;top:740.43px;font-size:23px;font-weight:400;color:#065f46;letter-spacing:0.000px;font-family:'Liberation Sans', sans-serif;transform:scaleX(0.9178);transform-origin:0 0;-webkit-text-stroke:0.64px #065f46;">ACTIVE</div>
<div class="t" style="left:1928.60px;top:736.19px;font-size:28px;font-weight:400;color:#0a0a0a;letter-spacing:0.000px;font-family:'Liberation Sans', sans-serif;transform:scaleX(0.9736);transform-origin:0 0;">2026-03-12 00:00:00+05:30</div>
<div class="b" style="left:2330.3px;top:728.3px;width:53.69999999999982px;height:43.40000000000009px;background:#f3f4f6;border-radius:22px"></div>
<div class="t" style="left:2351.32px;top:741.13px;font-size:23px;font-weight:400;color:#1e293b;letter-spacing:0.000px;font-family:'Liberation Sans', sans-serif;-webkit-text-stroke:0.64px #1e293b;">0</div>
<div class="b" style="left:530px;top:878px;width:1980px;height:2px;background:#e5e5e5"></div>
<div class="t" style="left:563.00px;top:825.02px;font-size:27px;font-weight:700;color:#0a0a0a;letter-spacing:0.000px;font-family:'Liberation Mono', monospace;transform:scaleX(0.9321);transform-origin:0 0;">EMP-019</div>
<div class="t" style="left:783.50px;top:822.19px;font-size:28px;font-weight:400;color:#0a0a0a;letter-spacing:0.000px;font-family:'Liberation Sans', sans-serif;transform:scaleX(0.9246);transform-origin:0 0;">E2E Test Employee</div>
<div class="t" style="left:1155.50px;top:822.19px;font-size:28px;font-weight:400;color:#0a0a0a;letter-spacing:0.000px;font-family:'Liberation Sans', sans-serif;transform:scaleX(0.9491);transform-origin:0 0;">Test Engineer</div>
<div class="b" style="left:1468.6px;top:814.3px;width:180.70000000000005px;height:43.40000000000009px;background:#dbeafe;border-radius:22px"></div>
<div class="t" style="left:1489.34px;top:826.43px;font-size:23px;font-weight:400;color:#1e40af;letter-spacing:0.000px;font-family:'Liberation Sans', sans-serif;transform:scaleX(1.0543);transform-origin:0 0;-webkit-text-stroke:0.64px #1e40af;">Maintenance</div>
<div class="b" style="left:1714.4px;top:814.3px;width:116.59999999999991px;height:43.40000000000009px;background:#d1fae5;border-radius:22px"></div>
<div class="t" style="left:1734.30px;top:826.43px;font-size:23px;font-weight:400;color:#065f46;letter-spacing:0.000px;font-family:'Liberation Sans', sans-serif;transform:scaleX(0.9178);transform-origin:0 0;-webkit-text-stroke:0.64px #065f46;">ACTIVE</div>
<div class="t" style="left:1928.60px;top:822.19px;font-size:28px;font-weight:400;color:#0a0a0a;letter-spacing:0.000px;font-family:'Liberation Sans', sans-serif;transform:scaleX(0.9736);transform-origin:0 0;">2026-03-12 00:00:00+05:30</div>
<div class="b" style="left:2330.3px;top:814.3px;width:53.69999999999982px;height:43.40000000000009px;background:#f3f4f6;border-radius:22px"></div>
<div class="t" style="left:2351.32px;top:827.13px;font-size:23px;font-weight:400;color:#1e293b;letter-spacing:0.000px;font-family:'Liberation Sans', sans-serif;-webkit-text-stroke:0.64px #1e293b;">0</div>
<div class="b" style="left:530px;top:964px;width:1980px;height:2px;background:#e5e5e5"></div>
<div class="t" style="left:563.00px;top:911.02px;font-size:27px;font-weight:700;color:#0a0a0a;letter-spacing:0.000px;font-family:'Liberation Mono', monospace;transform:scaleX(0.9321);transform-origin:0 0;">EMP-018</div>
<div class="t" style="left:783.50px;top:908.19px;font-size:28px;font-weight:400;color:#0a0a0a;letter-spacing:0.000px;font-family:'Liberation Sans', sans-serif;transform:scaleX(0.9246);transform-origin:0 0;">E2E Test Employee</div>
<div class="t" style="left:1155.50px;top:908.19px;font-size:28px;font-weight:400;color:#0a0a0a;letter-spacing:0.000px;font-family:'Liberation Sans', sans-serif;transform:scaleX(0.9491);transform-origin:0 0;">Test Engineer</div>
<div class="b" style="left:1468.6px;top:900.3px;width:180.70000000000005px;height:43.40000000000009px;background:#dbeafe;border-radius:22px"></div>
<div class="t" style="left:1489.34px;top:912.43px;font-size:23px;font-weight:400;color:#1e40af;letter-spacing:0.000px;font-family:'Liberation Sans', sans-serif;transform:scaleX(1.0543);transform-origin:0 0;-webkit-text-stroke:0.64px #1e40af;">Maintenance</div>
<div class="b" style="left:1714.4px;top:900.3px;width:116.59999999999991px;height:43.40000000000009px;background:#d1fae5;border-radius:22px"></div>
<div class="t" style="left:1734.30px;top:912.43px;font-size:23px;font-weight:400;color:#065f46;letter-spacing:0.000px;font-family:'Liberation Sans', sans-serif;transform:scaleX(0.9178);transform-origin:0 0;-webkit-text-stroke:0.64px #065f46;">ACTIVE</div>
<div class="t" style="left:1928.60px;top:908.19px;font-size:28px;font-weight:400;color:#0a0a0a;letter-spacing:0.000px;font-family:'Liberation Sans', sans-serif;transform:scaleX(0.9736);transform-origin:0 0;">2026-03-12 00:00:00+05:30</div>
<div class="b" style="left:2330.3px;top:900.3px;width:53.69999999999982px;height:43.40000000000009px;background:#f3f4f6;border-radius:22px"></div>
<div class="t" style="left:2351.32px;top:913.13px;font-size:23px;font-weight:400;color:#1e293b;letter-spacing:0.000px;font-family:'Liberation Sans', sans-serif;-webkit-text-stroke:0.64px #1e293b;">0</div>
<div class="b" style="left:530px;top:1050px;width:1980px;height:2px;background:#e5e5e5"></div>
<div class="t" style="left:563.00px;top:997.02px;font-size:27px;font-weight:700;color:#0a0a0a;letter-spacing:0.000px;font-family:'Liberation Mono', monospace;transform:scaleX(0.9321);transform-origin:0 0;">EMP-017</div>
<div class="t" style="left:783.50px;top:994.19px;font-size:28px;font-weight:400;color:#0a0a0a;letter-spacing:0.000px;font-family:'Liberation Sans', sans-serif;transform:scaleX(0.9246);transform-origin:0 0;">E2E Test Employee</div>
<div class="t" style="left:1155.50px;top:994.19px;font-size:28px;font-weight:400;color:#0a0a0a;letter-spacing:0.000px;font-family:'Liberation Sans', sans-serif;transform:scaleX(0.9491);transform-origin:0 0;">Test Engineer</div>
<div class="b" style="left:1468.6px;top:986.3px;width:180.70000000000005px;height:43.40000000000009px;background:#dbeafe;border-radius:22px"></div>
<div class="t" style="left:1489.34px;top:998.43px;font-size:23px;font-weight:400;color:#1e40af;letter-spacing:0.000px;font-family:'Liberation Sans', sans-serif;transform:scaleX(1.0543);transform-origin:0 0;-webkit-text-stroke:0.64px #1e40af;">Maintenance</div>
<div class="b" style="left:1714.4px;top:986.3px;width:116.59999999999991px;height:43.40000000000009px;background:#d1fae5;border-radius:22px"></div>
<div class="t" style="left:1734.30px;top:998.43px;font-size:23px;font-weight:400;color:#065f46;letter-spacing:0.000px;font-family:'Liberation Sans', sans-serif;transform:scaleX(0.9178);transform-origin:0 0;-webkit-text-stroke:0.64px #065f46;">ACTIVE</div>
<div class="t" style="left:1928.60px;top:994.19px;font-size:28px;font-weight:400;color:#0a0a0a;letter-spacing:0.000px;font-family:'Liberation Sans', sans-serif;transform:scaleX(0.9736);transform-origin:0 0;">2026-03-12 00:00:00+05:30</div>
<div class="b" style="left:2330.3px;top:986.3px;width:53.69999999999982px;height:43.40000000000009px;background:#f3f4f6;border-radius:22px"></div>
<div class="t" style="left:2351.32px;top:999.13px;font-size:23px;font-weight:400;color:#1e293b;letter-spacing:0.000px;font-family:'Liberation Sans', sans-serif;-webkit-text-stroke:0.64px #1e293b;">0</div>
<div class="b" style="left:530px;top:1136px;width:1980px;height:2px;background:#e5e5e5"></div>
<div class="t" style="left:563.00px;top:1083.02px;font-size:27px;font-weight:700;color:#0a0a0a;letter-spacing:0.000px;font-family:'Liberation Mono', monospace;transform:scaleX(0.9321);transform-origin:0 0;">EMP-016</div>
<div class="t" style="left:783.50px;top:1080.19px;font-size:28px;font-weight:400;color:#0a0a0a;letter-spacing:0.000px;font-family:'Liberation Sans', sans-serif;transform:scaleX(0.9246);transform-origin:0 0;">E2E Test Employee</div>
<div class="t" style="left:1155.50px;top:1080.19px;font-size:28px;font-weight:400;color:#0a0a0a;letter-spacing:0.000px;font-family:'Liberation Sans', sans-serif;transform:scaleX(0.9491);transform-origin:0 0;">Test Engineer</div>
<div class="b" style="left:1468.6px;top:1072.3px;width:180.70000000000005px;height:43.40000000000009px;background:#dbeafe;border-radius:22px"></div>
<div class="t" style="left:1489.34px;top:1084.43px;font-size:23px;font-weight:400;color:#1e40af;letter-spacing:0.000px;font-family:'Liberation Sans', sans-serif;transform:scaleX(1.0543);transform-origin:0 0;-webkit-text-stroke:0.64px #1e40af;">Maintenance</div>
<div class="b" style="left:1714.4px;top:1072.3px;width:116.59999999999991px;height:43.40000000000009px;background:#d1fae5;border-radius:22px"></div>
<div class="t" style="left:1734.30px;top:1084.43px;font-size:23px;font-weight:400;color:#065f46;letter-spacing:0.000px;font-family:'Liberation Sans', sans-serif;transform:scaleX(0.9178);transform-origin:0 0;-webkit-text-stroke:0.64px #065f46;">ACTIVE</div>
<div class="t" style="left:1928.60px;top:1080.19px;font-size:28px;font-weight:400;color:#0a0a0a;letter-spacing:0.000px;font-family:'Liberation Sans', sans-serif;transform:scaleX(0.9736);transform-origin:0 0;">2026-03-12 00:00:00+05:30</div>
<div class="b" style="left:2330.3px;top:1072.3px;width:53.69999999999982px;height:43.40000000000009px;background:#f3f4f6;border-radius:22px"></div>
<div class="t" style="left:2351.32px;top:1085.13px;font-size:23px;font-weight:400;color:#1e293b;letter-spacing:0.000px;font-family:'Liberation Sans', sans-serif;-webkit-text-stroke:0.64px #1e293b;">0</div>
<div class="b" style="left:530px;top:1222px;width:1980px;height:2px;background:#e5e5e5"></div>
<div class="t" style="left:563.00px;top:1169.02px;font-size:27px;font-weight:700;color:#0a0a0a;letter-spacing:0.000px;font-family:'Liberation Mono', monospace;transform:scaleX(0.9321);transform-origin:0 0;">EMP-015</div>
<div class="t" style="left:783.50px;top:1166.19px;font-size:28px;font-weight:400;color:#0a0a0a;letter-spacing:0.000px;font-family:'Liberation Sans', sans-serif;transform:scaleX(0.9246);transform-origin:0 0;">E2E Test Employee</div>
<div class="t" style="left:1155.50px;top:1166.19px;font-size:28px;font-weight:400;color:#0a0a0a;letter-spacing:0.000px;font-family:'Liberation Sans', sans-serif;transform:scaleX(0.9491);transform-origin:0 0;">Test Engineer</div>
<div class="b" style="left:1468.6px;top:1158.3px;width:180.70000000000005px;height:43.40000000000009px;background:#dbeafe;border-radius:22px"></div>
<div class="t" style="left:1489.34px;top:1170.43px;font-size:23px;font-weight:400;color:#1e40af;letter-spacing:0.000px;font-family:'Liberation Sans', sans-serif;transform:scaleX(1.0543);transform-origin:0 0;-webkit-text-stroke:0.64px #1e40af;">Maintenance</div>
<div class="b" style="left:1714.4px;top:1158.3px;width:116.59999999999991px;height:43.40000000000009px;background:#d1fae5;border-radius:22px"></div>
<div class="t" style="left:1734.30px;top:1170.43px;font-size:23px;font-weight:400;color:#065f46;letter-spacing:0.000px;font-family:'Liberation Sans', sans-serif;transform:scaleX(0.9178);transform-origin:0 0;-webkit-text-stroke:0.64px #065f46;">ACTIVE</div>
<div class="t" style="left:1928.60px;top:1166.19px;font-size:28px;font-weight:400;color:#0a0a0a;letter-spacing:0.000px;font-family:'Liberation Sans', sans-serif;transform:scaleX(0.9736);transform-origin:0 0;">2026-03-12 00:00:00+05:30</div>
<div class="b" style="left:2330.3px;top:1158.3px;width:53.69999999999982px;height:43.40000000000009px;background:#f3f4f6;border-radius:22px"></div>
<div class="t" style="left:2351.32px;top:1171.13px;font-size:23px;font-weight:400;color:#1e293b;letter-spacing:0.000px;font-family:'Liberation Sans', sans-serif;-webkit-text-stroke:0.64px #1e293b;">0</div>
<div class="b" style="left:530px;top:1308px;width:1980px;height:2px;background:#e5e5e5"></div>
<div class="t" style="left:563.00px;top:1255.02px;font-size:27px;font-weight:700;color:#0a0a0a;letter-spacing:0.000px;font-family:'Liberation Mono', monospace;transform:scaleX(0.9321);transform-origin:0 0;">EMP-014</div>
<div class="t" style="left:783.50px;top:1252.19px;font-size:28px;font-weight:400;color:#0a0a0a;letter-spacing:0.000px;font-family:'Liberation Sans', sans-serif;transform:scaleX(0.9246);transform-origin:0 0;">E2E Test Employee</div>
<div class="t" style="left:1155.50px;top:1252.19px;font-size:28px;font-weight:400;color:#0a0a0a;letter-spacing:0.000px;font-family:'Liberation Sans', sans-serif;transform:scaleX(0.9491);transform-origin:0 0;">Test Engineer</div>
<div class="b" style="left:1468.6px;top:1244.3px;width:180.70000000000005px;height:43.40000000000009px;background:#dbeafe;border-radius:22px"></div>
<div class="t" style="left:1489.34px;top:1256.43px;font-size:23px;font-weight:400;color:#1e40af;letter-spacing:0.000px;font-family:'Liberation Sans', sans-serif;transform:scaleX(1.0543);transform-origin:0 0;-webkit-text-stroke:0.64px #1e40af;">Maintenance</div>
<div class="b" style="left:1714.4px;top:1244.3px;width:116.59999999999991px;height:43.40000000000009px;background:#d1fae5;border-radius:22px"></div>
<div class="t" style="left:1734.30px;top:1256.43px;font-size:23px;font-weight:400;color:#065f46;letter-spacing:0.000px;font-family:'Liberation Sans', sans-serif;transform:scaleX(0.9178);transform-origin:0 0;-webkit-text-stroke:0.64px #065f46;">ACTIVE</div>
<div class="t" style="left:1928.60px;top:1252.19px;font-size:28px;font-weight:400;color:#0a0a0a;letter-spacing:0.000px;font-family:'Liberation Sans', sans-serif;transform:scaleX(0.9736);transform-origin:0 0;">2026-03-12 00:00:00+05:30</div>
<div class="b" style="left:2330.3px;top:1244.3px;width:53.69999999999982px;height:43.40000000000009px;background:#f3f4f6;border-radius:22px"></div>
<div class="t" style="left:2351.32px;top:1257.13px;font-size:23px;font-weight:400;color:#1e293b;letter-spacing:0.000px;font-family:'Liberation Sans', sans-serif;-webkit-text-stroke:0.64px #1e293b;">0</div>
<div class="b" style="left:530px;top:1394px;width:1980px;height:2px;background:#e5e5e5"></div>
<div class="t" style="left:563.00px;top:1341.02px;font-size:27px;font-weight:700;color:#0a0a0a;letter-spacing:0.000px;font-family:'Liberation Mono', monospace;transform:scaleX(0.9321);transform-origin:0 0;">EMP-013</div>
<div class="t" style="left:783.50px;top:1338.19px;font-size:28px;font-weight:400;color:#0a0a0a;letter-spacing:0.000px;font-family:'Liberation Sans', sans-serif;transform:scaleX(0.9246);transform-origin:0 0;">E2E Test Employee</div>
<div class="t" style="left:1155.50px;top:1338.19px;font-size:28px;font-weight:400;color:#0a0a0a;letter-spacing:0.000px;font-family:'Liberation Sans', sans-serif;transform:scaleX(0.9491);transform-origin:0 0;">Test Engineer</div>
<div class="b" style="left:1468.6px;top:1330.3px;width:180.70000000000005px;height:43.40000000000009px;background:#dbeafe;border-radius:22px"></div>
<div class="t" style="left:1489.34px;top:1342.43px;font-size:23px;font-weight:400;color:#1e40af;letter-spacing:0.000px;font-family:'Liberation Sans', sans-serif;transform:scaleX(1.0543);transform-origin:0 0;-webkit-text-stroke:0.64px #1e40af;">Maintenance</div>
<div class="b" style="left:1714.4px;top:1330.3px;width:116.59999999999991px;height:43.40000000000009px;background:#d1fae5;border-radius:22px"></div>
<div class="t" style="left:1734.30px;top:1342.43px;font-size:23px;font-weight:400;color:#065f46;letter-spacing:0.000px;font-family:'Liberation Sans', sans-serif;transform:scaleX(0.9178);transform-origin:0 0;-webkit-text-stroke:0.64px #065f46;">ACTIVE</div>
<div class="t" style="left:1928.60px;top:1338.19px;font-size:28px;font-weight:400;color:#0a0a0a;letter-spacing:0.000px;font-family:'Liberation Sans', sans-serif;transform:scaleX(0.9736);transform-origin:0 0;">2026-03-12 00:00:00+05:30</div>
<div class="b" style="left:2330.3px;top:1330.3px;width:53.69999999999982px;height:43.40000000000009px;background:#f3f4f6;border-radius:22px"></div>
<div class="t" style="left:2351.32px;top:1343.13px;font-size:23px;font-weight:400;color:#1e293b;letter-spacing:0.000px;font-family:'Liberation Sans', sans-serif;-webkit-text-stroke:0.64px #1e293b;">0</div>
<div class="b" style="left:530px;top:1480px;width:1980px;height:2px;background:#e5e5e5"></div>
<div class="t" style="left:563.00px;top:1427.02px;font-size:27px;font-weight:700;color:#0a0a0a;letter-spacing:0.000px;font-family:'Liberation Mono', monospace;transform:scaleX(0.9321);transform-origin:0 0;">EMP-012</div>
<div class="t" style="left:783.50px;top:1424.19px;font-size:28px;font-weight:400;color:#0a0a0a;letter-spacing:0.000px;font-family:'Liberation Sans', sans-serif;transform:scaleX(0.9246);transform-origin:0 0;">E2E Test Employee</div>
<div class="t" style="left:1155.50px;top:1424.19px;font-size:28px;font-weight:400;color:#0a0a0a;letter-spacing:0.000px;font-family:'Liberation Sans', sans-serif;transform:scaleX(0.9491);transform-origin:0 0;">Test Engineer</div>
<div class="b" style="left:1468.6px;top:1416.3px;width:180.70000000000005px;height:43.40000000000009px;background:#dbeafe;border-radius:22px"></div>
<div class="t" style="left:1489.34px;top:1428.43px;font-size:23px;font-weight:400;color:#1e40af;letter-spacing:0.000px;font-family:'Liberation Sans', sans-serif;transform:scaleX(1.0543);transform-origin:0 0;-webkit-text-stroke:0.64px #1e40af;">Maintenance</div>
<div class="b" style="left:1714.4px;top:1416.3px;width:116.59999999999991px;height:43.40000000000009px;background:#d1fae5;border-radius:22px"></div>
<div class="t" style="left:1734.30px;top:1428.43px;font-size:23px;font-weight:400;color:#065f46;letter-spacing:0.000px;font-family:'Liberation Sans', sans-serif;transform:scaleX(0.9178);transform-origin:0 0;-webkit-text-stroke:0.64px #065f46;">ACTIVE</div>
<div class="t" style="left:1928.60px;top:1424.19px;font-size:28px;font-weight:400;color:#0a0a0a;letter-spacing:0.000px;font-family:'Liberation Sans', sans-serif;transform:scaleX(0.9736);transform-origin:0 0;">2026-03-12 00:00:00+05:30</div>
<div class="b" style="left:2330.3px;top:1416.3px;width:53.69999999999982px;height:43.40000000000009px;background:#f3f4f6;border-radius:22px"></div>
<div class="t" style="left:2351.32px;top:1429.13px;font-size:23px;font-weight:400;color:#1e293b;letter-spacing:0.000px;font-family:'Liberation Sans', sans-serif;-webkit-text-stroke:0.64px #1e293b;">0</div>
<div class="b" style="left:530px;top:1482px;width:1980px;height:84px;background:#f5f5f5"></div>
<div class="b" style="left:530px;top:1566px;width:1980px;height:2px;background:#e5e5e5"></div>
<div class="t" style="left:563.00px;top:1513.02px;font-size:27px;font-weight:700;color:#0a0a0a;letter-spacing:0.000px;font-family:'Liberation Mono', monospace;transform:scaleX(0.9321);transform-origin:0 0;">EMP-011</div>
<div class="t" style="left:783.50px;top:1510.19px;font-size:28px;font-weight:400;color:#0a0a0a;letter-spacing:0.000px;font-family:'Liberation Sans', sans-serif;transform:scaleX(0.9246);transform-origin:0 0;">E2E Test Employee</div>
<div class="t" style="left:1155.50px;top:1510.19px;font-size:28px;font-weight:400;color:#0a0a0a;letter-spacing:0.000px;font-family:'Liberation Sans', sans-serif;transform:scaleX(0.9491);transform-origin:0 0;">Test Engineer</div>
<div class="b" style="left:1468.6px;top:1502.3px;width:180.70000000000005px;height:43.40000000000009px;background:#dbeafe;border-radius:22px"></div>
<div class="t" style="left:1489.34px;top:1514.43px;font-size:23px;font-weight:400;color:#1e40af;letter-spacing:0.000px;font-family:'Liberation Sans', sans-serif;transform:scaleX(1.0543);transform-origin:0 0;-webkit-text-stroke:0.64px #1e40af;">Maintenance</div>
<div class="b" style="left:1714.4px;top:1502.3px;width:116.59999999999991px;height:43.40000000000009px;background:#d1fae5;border-radius:22px"></div>
<div class="t" style="left:1734.30px;top:1514.43px;font-size:23px;font-weight:400;color:#065f46;letter-spacing:0.000px;font-family:'Liberation Sans', sans-serif;transform:scaleX(0.9178);transform-origin:0 0;-webkit-text-stroke:0.64px #065f46;">ACTIVE</div>
<div class="t" style="left:1928.60px;top:1510.19px;font-size:28px;font-weight:400;color:#0a0a0a;letter-spacing:0.000px;font-family:'Liberation Sans', sans-serif;transform:scaleX(0.9736);transform-origin:0 0;">2026-03-12 00:00:00+05:30</div>
<div class="b" style="left:2330.3px;top:1502.3px;width:53.69999999999982px;height:43.40000000000009px;background:#f3f4f6;border-radius:22px"></div>
<div class="t" style="left:2351.32px;top:1515.13px;font-size:23px;font-weight:400;color:#1e293b;letter-spacing:0.000px;font-family:'Liberation Sans', sans-serif;-webkit-text-stroke:0.64px #1e293b;">0</div>
<div class="b" style="left:530px;top:1652px;width:1980px;height:2px;background:#e5e5e5"></div>
<div class="t" style="left:563.00px;top:1599.02px;font-size:27px;font-weight:700;color:#0a0a0a;letter-spacing:0.000px;font-family:'Liberation Mono', monospace;transform:scaleX(0.9321);transform-origin:0 0;">EMP-010</div>
<div class="t" style="left:783.50px;top:1596.19px;font-size:28px;font-weight:400;color:#0a0a0a;letter-spacing:0.000px;font-family:'Liberation Sans', sans-serif;transform:scaleX(0.9246);transform-origin:0 0;">E2E Test Employee</div>
<div class="t" style="left:1155.50px;top:1596.19px;font-size:28px;font-weight:400;color:#0a0a0a;letter-spacing:0.000px;font-family:'Liberation Sans', sans-serif;transform:scaleX(0.9491);transform-origin:0 0;">Test Engineer</div>
<div class="b" style="left:1468.6px;top:1588.3px;width:180.70000000000005px;height:43.40000000000009px;background:#dbeafe;border-radius:22px"></div>
<div class="t" style="left:1489.34px;top:1600.43px;font-size:23px;font-weight:400;color:#1e40af;letter-spacing:0.000px;font-family:'Liberation Sans', sans-serif;transform:scaleX(1.0543);transform-origin:0 0;-webkit-text-stroke:0.64px #1e40af;">Maintenance</div>
<div class="b" style="left:1714.4px;top:1588.3px;width:116.59999999999991px;height:43.40000000000009px;background:#d1fae5;border-radius:22px"></div>
<div class="t" style="left:1734.30px;top:1600.43px;font-size:23px;font-weight:400;color:#065f46;letter-spacing:0.000px;font-family:'Liberation Sans', sans-serif;transform:scaleX(0.9178);transform-origin:0 0;-webkit-text-stroke:0.64px #065f46;">ACTIVE</div>
<div class="t" style="left:1928.60px;top:1596.19px;font-size:28px;font-weight:400;color:#0a0a0a;letter-spacing:0.000px;font-family:'Liberation Sans', sans-serif;transform:scaleX(0.9736);transform-origin:0 0;">2026-03-12 00:00:00+05:30</div>
<div class="b" style="left:2330.3px;top:1588.3px;width:53.69999999999982px;height:43.40000000000009px;background:#f3f4f6;border-radius:22px"></div>
<div class="t" style="left:2351.32px;top:1601.13px;font-size:23px;font-weight:400;color:#1e293b;letter-spacing:0.000px;font-family:'Liberation Sans', sans-serif;-webkit-text-stroke:0.64px #1e293b;">0</div>
</body></html>
